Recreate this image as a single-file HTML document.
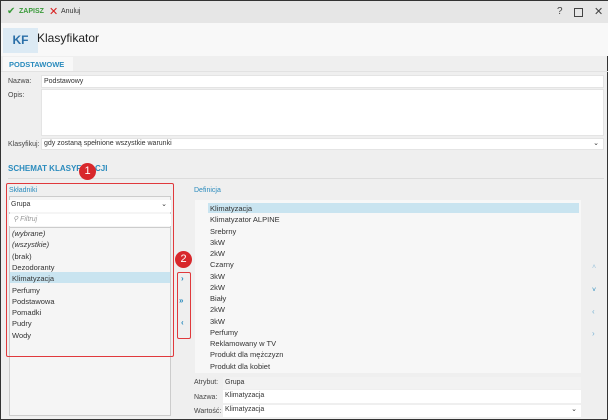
<!DOCTYPE html><html><head><meta charset="utf-8"><style>
*{margin:0;padding:0;box-sizing:border-box}
body{width:608px;height:420px;overflow:hidden;font-family:"Liberation Sans",sans-serif;font-size:7.5px;color:#333;background:#efefef;position:relative;border:1px solid #333}
.a{position:absolute}
.in{position:absolute;background:#fff;border:1px solid #e4e4e4}
.lbl{position:absolute;font-size:7px;color:#444}
.it{position:absolute;left:0;font-size:7.5px;color:#333;white-space:nowrap}
.badge{position:absolute;width:17px;height:17px;border-radius:50%;background:#d8282c;color:#fff;font-size:11px;text-align:center;line-height:17px}
.bl{color:#2a8bbd}
</style></head><body>
<div class="a" style="left:0;top:0;width:608px;height:22px;background:#e6e6e6"></div>
<div class="a" style="left:6px;top:5px;color:#3a9a3a;font-size:10px">✔</div>
<div class="a" style="left:18px;top:7px;color:#3a9a3a;font-size:7px;font-weight:bold">ZAPISZ</div>
<div class="a" style="left:48px;top:4px;color:#d82020;font-size:11px">✕</div>
<div class="a" style="left:60px;top:7px;font-size:7px">Anuluj</div>
<div class="a" style="left:556px;top:5px;font-size:10px;color:#444">?</div>
<div class="a" style="left:573px;top:7px;width:9px;height:9px;border:1.5px solid #444"></div>
<div class="a" style="left:593px;top:4px;font-size:11px;color:#444">✕</div>
<div class="a" style="left:0;top:22px;width:608px;height:33px;background:#f8f8f8"></div>
<div class="a" style="left:2px;top:27px;width:35px;height:25px;background:#dceaf4;color:#2a6fa8;font-size:12px;font-weight:bold;text-align:center;line-height:25px">KF</div>
<div class="a" style="left:36px;top:30px;font-size:12px;color:#222">Klasyfikator</div>
<div class="a" style="left:2px;top:56px;width:70px;height:15px;background:#f8f8f8;color:#2a8bbd;font-weight:bold;font-size:7.5px;padding:3px 0 0 6px">PODSTAWOWE</div>
<div class="a" style="left:0;top:70px;width:608px;height:1px;background:#e2e2e2"></div>
<div class="lbl" style="left:7px;top:77px">Nazwa:</div>
<div class="in" style="left:40px;top:74px;width:563px;height:13px;padding:2px 2px;font-size:7px">Podstawowy</div>
<div class="lbl" style="left:7px;top:91px">Opis:</div>
<div class="in" style="left:40px;top:88px;width:563px;height:47px"></div>
<div class="lbl" style="left:7px;top:140px">Klasyfikuj:</div>
<div class="in" style="left:40px;top:137px;width:563px;height:12px;padding:1px 2px;font-size:7px">gdy zostaną spełnione wszystkie warunki<span style="position:absolute;right:4px;top:0">⌄</span></div>
<div class="a bl" style="left:7px;top:163px;font-weight:bold;font-size:8px">SCHEMAT KLASYFIKACJI</div>
<div class="a" style="left:7px;top:177px;width:596px;height:1px;background:#dcdcdc"></div>
<div class="a" style="left:8px;top:195px;width:162px;height:220px;border:1px solid #ccc;background:#f5f5f5"></div>
<div class="a bl" style="left:8px;top:186px;font-size:7px">Składniki</div>
<div class="in" style="left:8px;top:199px;width:162px;height:12px;padding:1px 2px;font-size:7px;border:none">Grupa<span style="position:absolute;right:4px;top:0">⌄</span></div>
<div class="in" style="left:8px;top:213px;width:162px;height:12px;padding:1px 4px;font-size:7px;color:#999;border:none;font-style:italic">⚲ Filtruj</div>
<div class="a" style="left:8px;top:226px;width:162px;height:1px;background:#ccc"></div>
<div class="a" style="left:9px;top:271px;width:160px;height:11px;background:#c9e4f0"></div>
<div class="a" style="left:11px;top:228px">
<div class="it" style="top:0;font-style:italic">(wybrane)</div>
<div class="it" style="top:11.3px;font-style:italic">(wszystkie)</div>
<div class="it" style="top:22.6px">(brak)</div>
<div class="it" style="top:33.9px">Dezodoranty</div>
<div class="it" style="top:45.2px">Klimatyzacja</div>
<div class="it" style="top:56.5px">Perfumy</div>
<div class="it" style="top:67.8px">Podstawowa</div>
<div class="it" style="top:79.1px">Pomadki</div>
<div class="it" style="top:90.4px">Pudry</div>
<div class="it" style="top:101.7px">Wody</div>
</div>
<div class="a" style="left:5px;top:182px;width:168px;height:174px;border:1.3px solid #e0393c;border-radius:2px"></div>
<div class="a" style="left:176px;top:271px;width:14px;height:67px;border:1.3px solid #e0393c;border-radius:2px"></div>
<div class="a bl" style="left:180px;top:273px;font-size:8px;font-weight:bold">›</div>
<div class="a bl" style="left:178px;top:295px;font-size:8px;font-weight:bold">»</div>
<div class="a bl" style="left:180px;top:317px;font-size:8px;font-weight:bold">‹</div>
<div class="badge" style="left:78px;top:162px">1</div>
<div class="badge" style="left:174px;top:250px">2</div>
<div class="a bl" style="left:193px;top:186px;font-size:7px">Definicja</div>
<div class="a" style="left:194px;top:199px;width:386px;height:173px;background:#f7f7f7"></div>
<div class="a" style="left:207px;top:202px;width:371px;height:10px;background:#c9e4f0"></div>
<div class="a" style="left:209px;top:203px">
<div class="it" style="top:0">Klimatyzacja</div>
<div class="it" style="top:11.25px">Klimatyzator ALPINE</div>
<div class="it" style="top:22.5px">Srebrny</div>
<div class="it" style="top:33.75px">3kW</div>
<div class="it" style="top:45px">2kW</div>
<div class="it" style="top:56.25px">Czarny</div>
<div class="it" style="top:67.5px">3kW</div>
<div class="it" style="top:78.75px">2kW</div>
<div class="it" style="top:90px">Biały</div>
<div class="it" style="top:101.25px">2kW</div>
<div class="it" style="top:112.5px">3kW</div>
<div class="it" style="top:123.75px">Perfumy</div>
<div class="it" style="top:135px">Reklamowany w TV</div>
<div class="it" style="top:146.25px">Produkt dla mężczyzn</div>
<div class="it" style="top:157.5px">Produkt dla kobiet</div>
</div>
<div class="a" style="left:591px;top:263px;color:#9cc4dc;font-size:7px">˄</div>
<div class="a bl" style="left:591px;top:286px;font-size:7px">˅</div>
<div class="a" style="left:591px;top:306px;color:#7ab3d4;font-size:8px">‹</div>
<div class="a" style="left:591px;top:328px;color:#7ab3d4;font-size:8px">›</div>
<div class="lbl" style="left:193px;top:378px">Atrybut:</div>
<div class="a" style="left:222px;top:376px;width:358px;height:12px;background:#f2f2f2;padding:2px 2px;font-size:7px">Grupa</div>
<div class="lbl" style="left:193px;top:393px">Nazwa:</div>
<div class="in" style="left:222px;top:389px;width:358px;height:13px;padding:2px 2px;font-size:7px;border:none">Klimatyzacja</div>
<div class="lbl" style="left:193px;top:407px">Wartość:</div>
<div class="in" style="left:222px;top:404px;width:358px;height:12px;padding:1px 2px;font-size:7px;border:none">Klimatyzacja<span style="position:absolute;right:4px;top:0">⌄</span></div>
</body></html>
